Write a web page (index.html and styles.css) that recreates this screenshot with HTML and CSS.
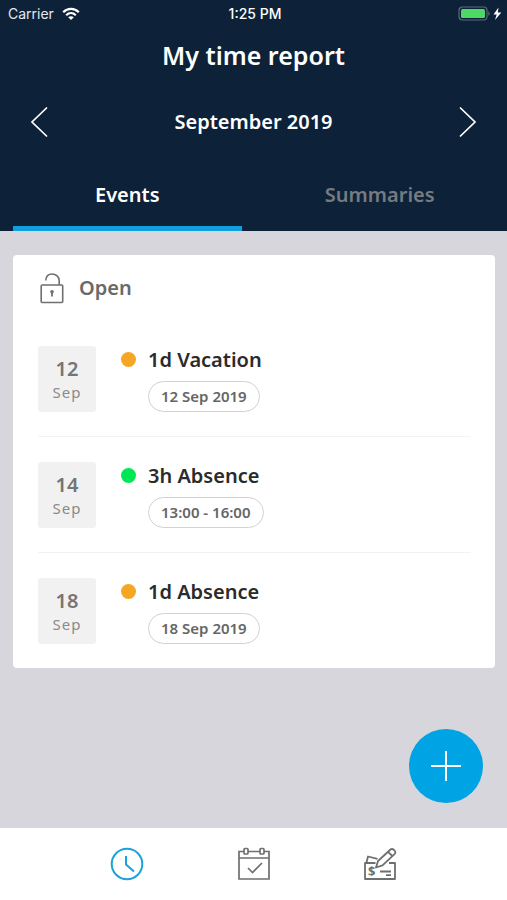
FILE: index.html
```html
<!DOCTYPE html>
<html lang="en">
<head>
<meta charset="utf-8">
<meta name="viewport" content="width=device-width, initial-scale=1">
<title>My time report</title>
<link rel="stylesheet" href="styles.css">
</head>
<body>
<header class="header">
  <div class="status">
    <div class="carrier">
      <span>Carrier</span>
      <svg width="18" height="14" viewBox="0 0 18 14" fill="none" stroke="#fff" stroke-width="2.2" aria-hidden="true">
        <path d="M1.2 5.2C5.6.8 12.4.8 16.8 5.2"/>
        <path d="M4.2 8.2C7 5.4 11 5.4 13.8 8.2"/>
        <path d="M9 13L6.2 10.2C7.8 8.8 10.2 8.8 11.8 10.2Z" fill="#fff" stroke="none"/>
      </svg>
    </div>
    <span class="clock">1:25 PM</span>
    <div class="battery">
      <svg width="44" height="16" viewBox="0 0 44 16" aria-hidden="true">
        <rect x="1" y="1" width="28" height="13" rx="3.5" fill="none" stroke="#5c6a7b" stroke-width="1.2"/>
        <rect x="3" y="3" width="24" height="9" rx="1.5" fill="#4cd964"/>
        <path d="M30.3 5.2c1.900.8 1.900 3.800 0 4.600z" fill="#5c6a7b"/>
        <path d="M40.500 1.500L35.500 8.500h3.200l-1.700 5.500L43.300 6.500h-3.500z" fill="#fff"/>
      </svg>
    </div>
  </div>
  <h1 class="title">My time report</h1>
  <div class="month">
    <button class="arrow" type="button" aria-label="Previous month">
      <svg width="18" height="30" viewBox="0 0 18 30" fill="none" stroke="#fff" stroke-width="1.700" stroke-linecap="round" aria-hidden="true"><path d="M16.500 1L2 15l14.500 14"/></svg>
    </button>
    <h2 class="month-name">September 2019</h2>
    <button class="arrow" type="button" aria-label="Next month">
      <svg width="18" height="30" viewBox="0 0 18 30" fill="none" stroke="#fff" stroke-width="1.700" stroke-linecap="round" aria-hidden="true"><path d="M1.500 1L16 15 1.500 29"/></svg>
    </button>
  </div>
  <nav class="tabs" aria-label="Report views">
    <a class="tab tab-active" href="#events">Events</a>
    <a class="tab" href="#summaries">Summaries</a>
  </nav>
</header>

<main class="main">
  <section class="card" id="events">
    <div class="card-head">
      <svg width="26" height="32" viewBox="0 0 26 32" fill="none" stroke="#6f6f6f" stroke-width="1.600" aria-hidden="true">
        <rect x="3.200" y="13" width="21.500" height="17.500" rx="1"/>
        <path d="M7.700 8.500C8 4.600 10.500 2 14 2c4 0 7.200 2.800 7.200 6.800V13"/>
        <path d="M14 20v4.500" stroke-width="1.800"/>
        <circle cx="14" cy="19.800" r="1.800" fill="#6f6f6f" stroke="none"/>
      </svg>
      <h2 class="card-title">Open</h2>
    </div>
    <ul class="events">
      <li class="event">
        <div class="date"><span class="day">12</span><span class="mon">Sep</span></div>
        <span class="dot"></span>
        <div class="info"><h3 class="name">1d Vacation</h3><span class="pill">12 Sep 2019</span></div>
      </li>
      <li class="event">
        <div class="date"><span class="day">14</span><span class="mon">Sep</span></div>
        <span class="dot dot-green"></span>
        <div class="info"><h3 class="name">3h Absence</h3><span class="pill">13:00 - 16:00</span></div>
      </li>
      <li class="event">
        <div class="date"><span class="day">18</span><span class="mon">Sep</span></div>
        <span class="dot"></span>
        <div class="info"><h3 class="name">1d Absence</h3><span class="pill">18 Sep 2019</span></div>
      </li>
    </ul>
  </section>
  <button class="add" type="button" aria-label="Add event">
    <svg width="32" height="32" viewBox="0 0 32 32" stroke="#fff" stroke-width="2" aria-hidden="true"><path d="M16 1v30M1 16h30"/></svg>
  </button>
</main>

<nav class="bottom" aria-label="Main">
  <a class="bottom-link" href="#time" aria-label="Time">
    <svg width="34" height="34" viewBox="0 0 34 34" fill="none" stroke="#1ba1dc" stroke-width="2" aria-hidden="true"><circle cx="17" cy="17" r="15.300"/><path d="M16 9v8.500l8 7"/></svg>
  </a>
  <a class="bottom-link" href="#calendar" aria-label="Calendar">
    <svg width="34" height="34" viewBox="0 0 34 34" fill="none" stroke="#6f6f6f" stroke-width="1.700" aria-hidden="true">
      <path d="M7 4.500H2V32h30V4.500h-5M11 4.500h12M2 11h30"/>
      <rect x="7" y="1.500" width="4" height="5.500" rx="1"/>
      <rect x="23" y="1.500" width="4" height="5.500" rx="1"/>
      <path d="M11 21l4.500 4.500L25 16"/>
    </svg>
  </a>
  <a class="bottom-link" href="#expenses" aria-label="Expenses">
    <svg width="34" height="34" viewBox="0 0 34 34" fill="none" stroke="#6f6f6f" stroke-width="1.800" stroke-linejoin="round" aria-hidden="true">
      <path d="M12.500 16H2v16h30V16h-6"/>
      <path d="M3.500 15.500L5 9.500l9.500 2.300"/>
      <path d="M13 20.500l2-6.500L27.500 2.500c2.200-1.700 6.200 2 4.300 4.300L19.500 18.300z"/>
      <path d="M25 4.800l4.400 4.200M17 24.500h11M23 28.200h5"/>
      <text class="dollar" x="5" y="29">$</text>
    </svg>
  </a>
</nav>
</body>
</html>
```
FILE: styles.css
```css
* {
  box-sizing: border-box;
}

body {
  margin: 0;
  min-height: 100vh;
  display: flex;
  flex-direction: column;
  background: #d7d6dc;
  color: #2b2b2b;
  font-family: "Noto Sans", sans-serif;
}

h1, h2, h3 {
  margin: 0;
  font-weight: 600;
}

a {
  text-decoration: none;
}

button {
  border: 0;
  padding: 0;
  cursor: pointer;
}

svg {
  display: block;
}

.header {
  background: #0d2238;
  color: #fff;
}

.status {
  display: grid;
  grid-template-columns: 1fr auto 1fr;
  align-items: center;
  height: 27px;
  padding: 0 5px 0 8px;
  font-family: Inter, sans-serif;
  font-size: 14px;
}

.carrier {
  display: flex;
  align-items: center;
  gap: 8px;
  color: #e3e8ee;
}

.clock {
  font-weight: 500;
}

.battery {
  display: flex;
  justify-content: flex-end;
}

.title {
  padding: 10px 0;
  font-size: 25px;
  line-height: 36px;
  text-align: center;
}

.month {
  display: flex;
  align-items: center;
  justify-content: space-between;
  padding: 17px 30px;
}

.month-name {
  font-size: 20px;
  line-height: 43px;
}

.arrow {
  background: none;
}

.tabs {
  display: grid;
  grid-template-columns: 1fr 1fr;
  gap: 24px;
  padding: 0 13px;
}

.tab {
  padding: 17px 0 13px;
  border-bottom: 5px solid transparent;
  color: #757b82;
  font-size: 20px;
  font-weight: 600;
  line-height: 36px;
  text-align: center;
}

.tab-active {
  border-color: #0f9fdf;
  color: #fff;
}

.main {
  flex: 1;
  display: flex;
  flex-direction: column;
  justify-content: space-between;
  gap: 24px;
  padding: 24px 12px 25px 13px;
}

.card {
  padding: 0 24px 0 25px;
  border-radius: 4px;
  background: #fff;
}

.card-head {
  display: flex;
  align-items: center;
  gap: 15px;
  height: 66px;
}

.card-title {
  color: #6a6a6a;
  font-size: 20px;
  line-height: 28px;
}

.events {
  margin: 0;
  padding: 0;
  list-style: none;
}

.event {
  display: flex;
  align-items: flex-start;
  padding: 25px 0 24px;
  border-top: 1px solid #f2f2f2;
}

.event:first-child {
  border-top: 0;
}

.date {
  display: flex;
  flex-direction: column;
  align-items: center;
  width: 58px;
  height: 66px;
  padding-top: 10px;
  border-radius: 3px;
  background: #f1f1f1;
  color: #757575;
}

.day {
  font-size: 20px;
  font-weight: 600;
  line-height: 26px;
}

.mon {
  color: #8a8a8a;
  font-size: 15px;
  letter-spacing: 1px;
  line-height: 20px;
}

.dot {
  width: 15px;
  height: 15px;
  margin: 6px 12px 0 25px;
  border-radius: 50%;
  background: #f5a623;
}

.dot-green {
  background: #00e756;
}

.info {
  display: flex;
  flex-direction: column;
  align-items: flex-start;
  gap: 8px;
}

.name {
  font-size: 20px;
  line-height: 27px;
}

.pill {
  padding: 0 12px;
  border: 1px solid #d2d2d2;
  border-radius: 16px;
  color: #666;
  font-size: 15px;
  font-weight: 600;
  line-height: 29px;
}

.add {
  display: grid;
  place-items: center;
  align-self: flex-end;
  width: 74px;
  height: 74px;
  margin-right: 12px;
  border-radius: 50%;
  background: #00a3e4;
}

.bottom {
  display: grid;
  grid-template-columns: repeat(3, 1fr);
  place-items: center;
  height: 72px;
  padding: 0 12.5%;
  background: #fff;
}

.dollar {
  fill: #6f6f6f;
  stroke: none;
  font-size: 13px;
  font-weight: 700;
}
```
